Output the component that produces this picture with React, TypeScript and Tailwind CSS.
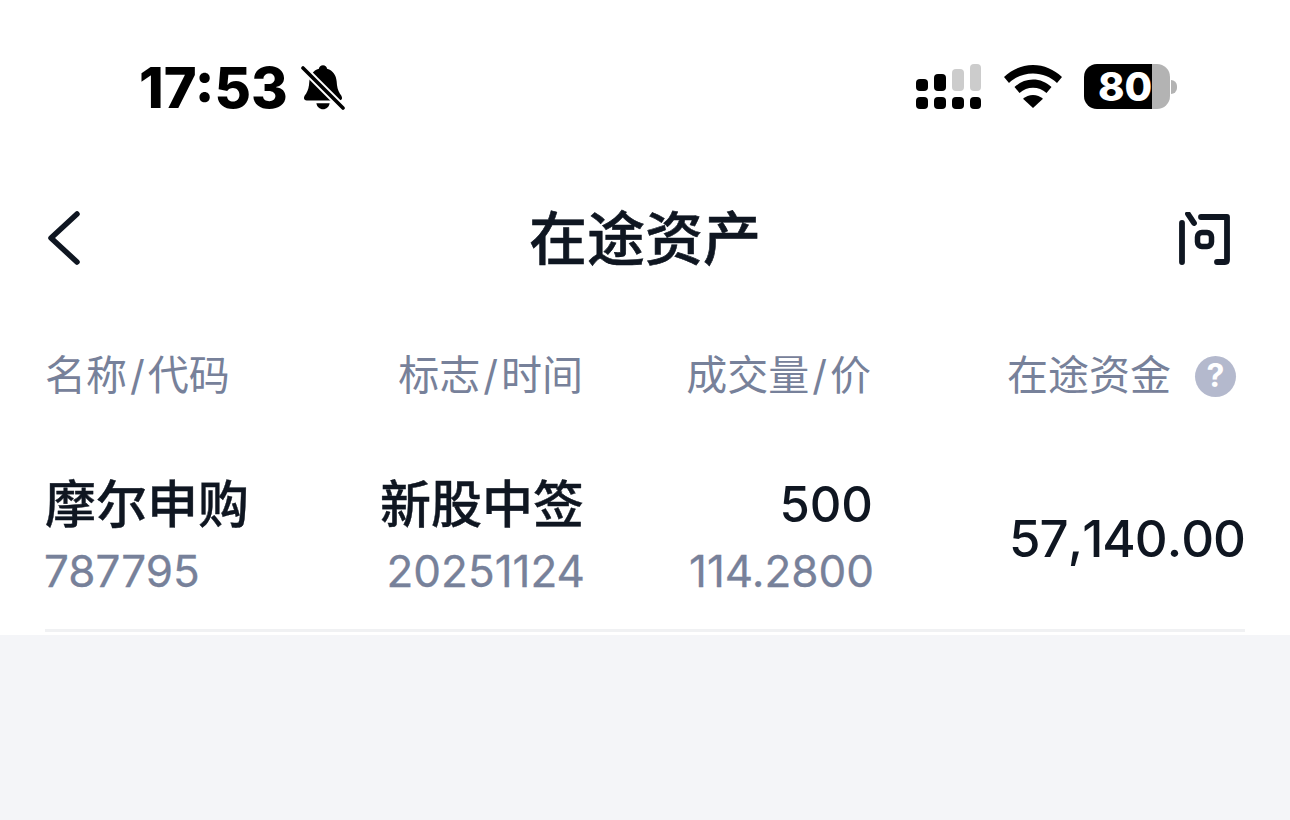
import React from "react";

const cjk = "font-['Inter','Noto_Sans_CJK_SC',sans-serif]";

const BellOff = () => (
  <svg width="46" height="46" viewBox="0 0 46 46" className="ml-[12px]">
    <g transform="translate(-2.300 -1.500) scale(1.1)">
      <path
        d="M23 2.500c2 0 3.400 1.300 3.700 3.100 5.400 1.500 8.300 6 8.700 11.500.3 4.700 1 8.500 3 11.200 1 1.400 1.900 2.400 1.900 3.900 0 1.300-1 2.300-2.500 2.300H8.200c-1.500 0-2.500-1-2.500-2.300 0-1.500.9-2.500 1.900-3.900 2-2.700 2.700-6.500 3-11.200.4-5.500 3.300-10 8.700-11.500.3-1.800 1.700-3.100 3.700-3.100Z"
        fill="#000"
      />
      <path d="M17 37h12c-.4 3.200-3 5.500-6 5.500s-5.600-2.300-6-5.500Z" fill="#000" />
    </g>
    <path d="M1 2 45 46" stroke="#fff" strokeWidth="7.500" />
    <path d="M3 4 43 44" stroke="#000" strokeWidth="3.600" strokeLinecap="round" />
  </svg>
);

const Signal = () => (
  <svg width="66" height="45" viewBox="0 0 66 45">
    <rect x="0" y="15" width="12" height="12" rx="4" fill="#000" />
    <rect x="18" y="10" width="12" height="17" rx="4" fill="#000" />
    <rect x="36" y="5" width="12" height="22" rx="4" fill="#ccc" />
    <rect x="54" y="0" width="11" height="27" rx="4" fill="#ccc" />
    <rect x="0" y="33" width="12" height="12" rx="4" fill="#000" />
    <rect x="18" y="33" width="12" height="12" rx="4" fill="#000" />
    <rect x="36" y="33" width="12" height="12" rx="4" fill="#000" />
    <rect x="54" y="33" width="11" height="12" rx="4" fill="#000" />
  </svg>
);

const Wifi = () => (
  <svg width="58" height="43" viewBox="0 0 58 43">
    <path d="M29 0c11 0 21 4.500 29 12l-5 6C46.500 12 38.500 8.500 29 8.500S11.500 12 5 18L0 12C8 4.500 18 0 29 0Z" fill="#000" />
    <path d="M29 14.500c7 0 13 2.600 18.500 7.500l-5 6c-4-3.400-8.500-5.200-13.500-5.200S19.500 24.600 15.500 28l-5-6C16 17.100 22 14.500 29 14.500Z" fill="#000" />
    <path d="M29 30c3.800 0 7.200 1.300 10 3.800L29 43 19 33.800C21.800 31.300 25.200 30 29 30Z" fill="#000" />
  </svg>
);

const Battery = () => (
  <div className="flex items-center">
    <div className="relative w-[86px] h-[45px]">
      <div className="absolute inset-0 flex">
        <div className="w-[68px] rounded-l-[13px] bg-black" />
        <div className="w-[18px] rounded-r-[13px] bg-[#b3b3b3]" />
      </div>
      <span className="relative block pl-[14px] leading-[45px] text-white font-extrabold text-[40px] font-['Inter',sans-serif]">
        80
      </span>
    </div>
    <div className="w-[6px] h-[14px] ml-[1px] rounded-r-full bg-[#b3b3b3]" />
  </div>
);

const Slash = () => <span className="mx-[3px]">/</span>;

const subText = "text-[44px] leading-[50px] mt-[14px] text-[#77819a] [-webkit-text-stroke:0.3px_#77819a]";

const Row = ({ top, bottom, className, topClass }: { top: string; bottom: string; className: string; topClass: string }) => (
  <div className={`flex flex-col items-end ${className}`}>
    <p className={`${topClass} leading-[54px] text-[#0f1621] font-medium`}>{top}</p>
    <p className={`${subText} mr-[-1px]`}>{bottom}</p>
  </div>
);

export default function App() {
  return (
    <div className={`w-[1290px] h-[820px] flex flex-col bg-[#f4f5f8] overflow-hidden ${cjk}`}>
      <div className="h-[635px] bg-white flex flex-col">
        {/* status bar */}
        <div className="h-[170px] flex items-start justify-between pt-[64px] pl-[139px] pr-[113px]">
          <div className="flex items-center h-[46px]">
            <span className="text-[56px] leading-[46px] font-extrabold text-black font-['Inter',sans-serif] mt-[2px]">
              17:53
            </span>
            <BellOff />
          </div>
          <div className="flex items-center gap-[22px]">
            <Signal />
            <Wifi />
            <Battery />
          </div>
        </div>

        {/* nav */}
        <div className="h-[140px] flex items-center pl-[47px] pr-[60px] mt-[-1px]">
          <svg width="36" height="56" viewBox="0 0 36 56">
            <path d="M30 3 4 27l26 24" fill="none" stroke="#0f1621" strokeWidth="5.500" strokeLinecap="round" strokeLinejoin="round" />
          </svg>
          <h1 className="ml-[446px] text-[58px] leading-[64px] font-medium text-[#0f1621] [-webkit-text-stroke:0.6px_#0f1621]">在途资产</h1>
          <svg width="52" height="54" viewBox="0 0 52 54" className="ml-auto">
            <path d="M4 11v39M10 2l6 9M23 5h26v43c0 1.500-.7 2-2 2h-8" fill="none" stroke="#0f1621" strokeWidth="5.800" strokeLinecap="round" strokeLinejoin="round" />
            <rect x="19.500" y="20.500" width="14" height="14" rx="4.500" fill="none" stroke="#0f1621" strokeWidth="5.500" />
          </svg>
        </div>

        {/* table head */}
        <div className="mx-[45px] h-[64px] mt-[34px] flex items-center text-[41px] text-[#77819a] leading-[48px]">
          <div className="w-[241px]">名称<Slash />代码</div>
          <div className="w-[297px] text-right">标志<Slash />时间</div>
          <div className="w-[288px] text-right">成交量<Slash />价</div>
          <div className="flex-1 flex items-center justify-end">
            <span>在途资金</span>
            <span className="ml-[24px] mr-[9px] mt-[2px] w-[41px] h-[41px] rounded-full bg-[#b4b9cd] text-white text-[32px] font-bold flex items-center justify-center">
              ?
            </span>
          </div>
        </div>

        {/* row */}
        <div className="mx-[45px] mt-[71px] h-[154px] flex border-b-[3px] border-[#f0f1f3]">
          <div className="w-[240px] flex flex-col">
            <p className="text-[51px] leading-[54px] text-[#0f1621] font-medium [-webkit-text-stroke:0.4px_#0f1621]">摩尔申购</p>
            <p className={`${subText} ml-[-1px]`}>787795</p>
          </div>
          <Row top="新股中签" bottom="20251124" className="w-[299px]" topClass="text-[51px] [-webkit-text-stroke:0.4px_#0f1621]" />
          <Row top="500" bottom="114.2800" className="w-[289px]" topClass="text-[49px]" />
          <div className="flex-1 flex justify-end pt-[31px]">
            <span className="text-[51px] leading-[60px] text-[#0f1621] font-medium [font-kerning:none] tracking-[-1px]">57,140.00</span>
          </div>
        </div>
      </div>
    </div>
  );
}
